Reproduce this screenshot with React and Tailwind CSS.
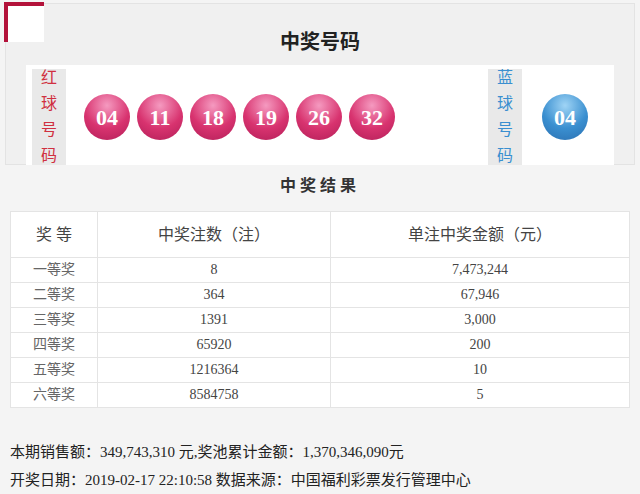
const reds = ["04", "11", "18", "19", "26", "32"];
const rows = [
  ["一等奖", "8", "7,473,244"],
  ["二等奖", "364", "67,946"],
  ["三等奖", "1391", "3,000"],
  ["四等奖", "65920", "200"],
  ["五等奖", "1216364", "10"],
  ["六等奖", "8584758", "5"],
];

function Ball({ n, blue }) {
  return (
    <div
      className={`w-[46px] h-[46px] rounded-full flex items-center justify-center text-white font-bold text-[22px] font-[Liberation_Serif,serif] ${
        blue
          ? "bg-[radial-gradient(circle_at_50%_25%,#9fd4f5,#3a8fd0_55%,#2a6fb0)]"
          : "bg-[radial-gradient(circle_at_50%_25%,#f59ac0,#d8336f_55%,#b21e58)]"
      }`}
    >
      {n}
    </div>
  );
}

function Label({ text, color }) {
  return (
    <div className={`w-[34px] bg-[#e9e9e9] flex flex-col items-center justify-center gap-[4px] text-[16px] leading-[22px] ${color}`}>
      {text.split("").map((c, i) => (
        <span key={i}>{c}</span>
      ))}
    </div>
  );
}

export default function App() {
  return (
    <div className="w-[640px] h-[494px] bg-[#f4f4f4] overflow-hidden font-[Liberation_Serif,Noto_Sans_CJK_SC,serif] text-[#333]">
      <div className="relative mx-[5px] mt-[3px] h-[162px] bg-[#f0f0f0] border border-[#e3e3e3] pt-[25px]">
        <div className="absolute left-[-2px] top-[-2px] w-[40px] h-[40px] border-l-[4px] border-t-[4px] border-[#b3123a] bg-white" />
        <div className="text-center text-[20px] font-bold text-[#222] leading-[26px]">中奖号码</div>
        <div className="mx-[20px] mt-[10px] h-[100px] bg-white flex px-[6px] pt-[4px]">
          <Label text="红球号码" color="text-[#d03040]" />
          <div className="flex-1 flex items-center gap-[7px] pl-[18px]">
            {reds.map((n) => (
              <Ball key={n} n={n} />
            ))}
          </div>
          <Label text="蓝球号码" color="text-[#3a8fd0]" />
          <div className="w-[86px] flex items-center justify-center">
            <Ball n="04" blue />
          </div>
        </div>
      </div>
      <div className="text-center text-[16px] tracking-[4px] font-bold mt-[10px] leading-[22px]">中奖结果</div>
      <table className="mx-[10px] mt-[14px] w-[620px] bg-white border-collapse text-[14px] leading-none text-[#444]">
        <thead>
          <tr className="h-[46px] text-[16px]">
            <th className="font-normal border border-[#e4e4e4] w-[87px]">奖 等</th>
            <th className="font-normal border border-[#e4e4e4] w-[233px]">中奖注数（注）</th>
            <th className="font-normal border border-[#e4e4e4]">单注中奖金额（元）</th>
          </tr>
        </thead>
        <tbody>
          {rows.map((r) => (
            <tr key={r[0]} className="h-[25px]">
              <td className="border border-[#e4e4e4] text-center text-[#666] p-0">{r[0]}</td>
              <td className="border border-[#e4e4e4] text-center p-0">{r[1]}</td>
              <td className="border border-[#e4e4e4] text-center p-0">{r[2]}</td>
            </tr>
          ))}
        </tbody>
      </table>
      <div className="mt-[30px] ml-[10px] text-[15px] leading-[28px] text-[#222]">
        <div>本期销售额：349,743,310 元,奖池累计金额：1,370,346,090元</div>
        <div>开奖日期：2019-02-17 22:10:58 数据来源：中国福利彩票发行管理中心</div>
      </div>
    </div>
  );
}
